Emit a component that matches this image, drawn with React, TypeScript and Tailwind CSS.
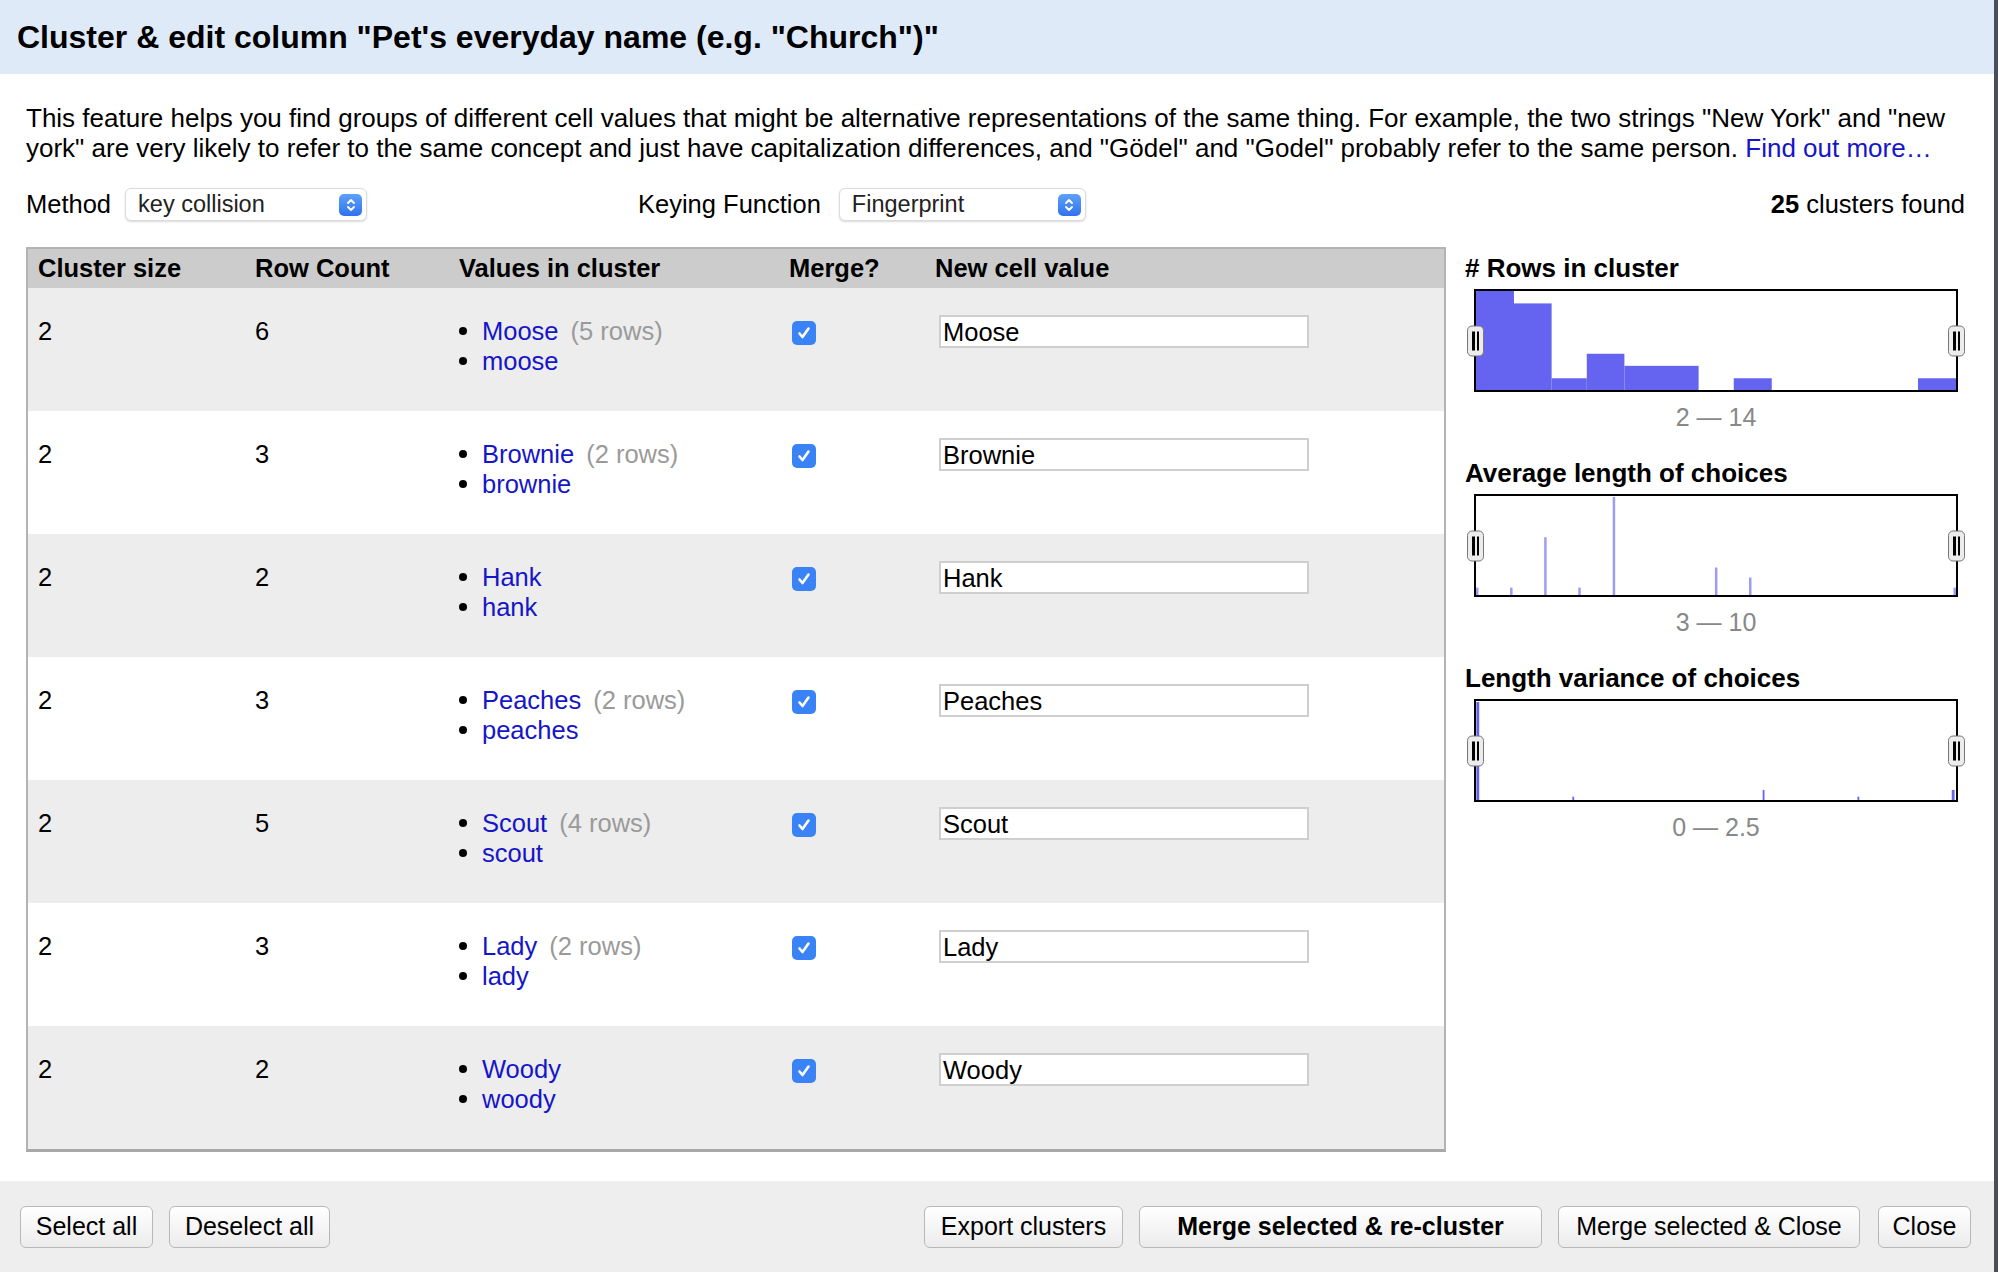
import React from "react";

type Value = { v: string; rows?: number };
type Cluster = { size: number; count: number; values: Value[] };

const clusters: Cluster[] = [
  { size: 2, count: 6, values: [{ v: "Moose", rows: 5 }, { v: "moose" }] },
  { size: 2, count: 3, values: [{ v: "Brownie", rows: 2 }, { v: "brownie" }] },
  { size: 2, count: 2, values: [{ v: "Hank" }, { v: "hank" }] },
  { size: 2, count: 3, values: [{ v: "Peaches", rows: 2 }, { v: "peaches" }] },
  { size: 2, count: 5, values: [{ v: "Scout", rows: 4 }, { v: "scout" }] },
  { size: 2, count: 3, values: [{ v: "Lady", rows: 2 }, { v: "lady" }] },
  { size: 2, count: 2, values: [{ v: "Woody" }, { v: "woody" }] },
];

// bars in a 1352 x 295 box
const rowBars = [
  [0, 107, 0],
  [107, 106, 37],
  [213, 99, 260],
  [312, 106, 187],
  [418, 209, 223],
  [726, 107, 260],
  [1245, 107, 260],
];
// thin lines: x, height
const avgLines = [
  [3, 22],
  [99, 22],
  [195, 172],
  [291, 22],
  [388, 292],
  [676, 82],
  [772, 52],
  [1348, 22],
];
const varLines = [
  [5, 292, 8],
  [274, 10, 5],
  [810, 30, 5],
  [1077, 10, 5],
  [1344, 30, 8],
];

const Stepper = () => (
  <span className="flex h-[22px] w-[23px] items-center justify-center rounded-[5px] bg-gradient-to-b from-[#5fa0fa] to-[#2f72ee]">
    <svg width="10" height="16" viewBox="0 0 10 16" fill="none" stroke="white" strokeWidth="1.9" strokeLinecap="round" strokeLinejoin="round">
      <path d="M2 6 5 3 8 6" />
      <path d="M2 10 5 13 8 10" />
    </svg>
  </span>
);

const Select = ({ label, width }: { label: string; width: string }) => (
  <div
    className={`flex h-[33px] ${width} items-center justify-between rounded-[6px] border border-[#dcdcdc] bg-white pl-[12px] pr-[4px] shadow-[0_1px_2px_rgba(0,0,0,0.15)]`}
  >
    <span className="text-[23.5px] text-[#222]">{label}</span>
    <Stepper />
  </div>
);

const Checkbox = () => (
  <span className="flex h-[24px] w-[24px] items-center justify-center rounded-[5px] bg-[#3a83f6]">
    <svg width="16" height="16" viewBox="0 0 16 16" fill="none" stroke="white" strokeWidth="2.6" strokeLinecap="round" strokeLinejoin="round">
      <path d="M3.5 8.5 6.5 12 12.5 3.5" />
    </svg>
  </span>
);

const Handle = ({ side }: { side: "left" | "right" }) => (
  <span
    className={`absolute top-1/2 flex h-[31px] w-[17px] -translate-y-1/2 items-center justify-center gap-[2px] rounded-[5px] border-[1.5px] border-[#777] bg-[#ececec] ${
      side === "left" ? "-left-[9px]" : "-right-[9px]"
    }`}
  >
    <span className="h-[19px] w-[2.5px] bg-black" />
    <span className="h-[19px] w-[2.5px] bg-black" />
  </span>
);

const Chart = ({
  title,
  range,
  children,
}: {
  title: string;
  range: string;
  children: React.ReactNode;
}) => (
  <div className="flex flex-col">
    <div className="text-[26px] font-bold leading-[30px]">{title}</div>
    <div className="relative ml-[9px] mt-[6px] h-[103px] w-[484px] border-2 border-black bg-white">
      <svg className="absolute inset-0 h-full w-full" viewBox="0 0 1352 295" preserveAspectRatio="none">
        {children}
      </svg>
      <Handle side="left" />
      <Handle side="right" />
    </div>
    <div className="ml-[9px] mt-[10px] w-[484px] text-center text-[25px] leading-[30px] text-[#888]">{range}</div>
  </div>
);

const Button = ({ children, className = "" }: { children: React.ReactNode; className?: string }) => (
  <button
    className={`h-[42px] rounded-[6px] border-[1.5px] border-[#b8b8b8] bg-gradient-to-b from-white to-[#ececec] text-[25px] leading-none text-black ${className}`}
  >
    {children}
  </button>
);

export default function App() {
  return (
    <div className="flex h-[1272px] w-full flex-col border-r-4 border-[#4a4f57] bg-white font-['Liberation_Sans',Arial,sans-serif] text-black">
      <div className="flex h-[74px] items-center bg-[#dfeaf9] px-[17px]">
        <h1 className="text-[32px] font-bold">Cluster &amp; edit column "Pet's everyday name (e.g. "Church")"</h1>
      </div>

      <div className="flex flex-1 flex-col pl-[26px] pr-[26px]">
        <p className="mt-[29px] text-[26px] leading-[30px]">
          This feature helps you find groups of different cell values that might be alternative representations of the
          same thing. For example, the two strings "New York" and "new york" are very likely to refer to the same concept
          and just have capitalization differences, and "Gödel" and "Godel" probably refer to the same person.{" "}
          <a className="text-[#1515c9]">Find out more…</a>
        </p>

        <div className="mt-[25px] flex h-[33px] items-center pr-[3px] text-[25.5px]">
          <div className="flex w-[612px] items-center">
            <span>Method</span>
            <div className="ml-[14px]">
              <Select label="key collision" width="w-[242px]" />
            </div>
          </div>
          <div className="flex items-center">
            <span>Keying Function</span>
            <div className="ml-[18px]">
              <Select label="Fingerprint" width="w-[247px]" />
            </div>
          </div>
          <div className="ml-auto">
            <b>25</b> clusters found
          </div>
        </div>

        <div className="mt-[26px] flex">
          <div className="w-[1420px] border-2 border-b-[3px] border-[#b4b4b4] border-b-[#a8a8a8] text-[25.5px]">
            <div className="grid h-[39px] grid-cols-[217px_204px_330px_150px_1fr] items-center bg-[#cccccc] font-bold">
              <div className="pl-[10px]">Cluster size</div>
              <div className="pl-[10px]">Row Count</div>
              <div className="pl-[10px]">Values in cluster</div>
              <div className="pl-[10px]">Merge?</div>
              <div className="pl-[6px]">New cell value</div>
            </div>
            {clusters.map((c, i) => (
              <div
                key={i}
                className={`grid h-[123px] grid-cols-[217px_204px_330px_150px_1fr] items-start leading-[30px] ${
                  i % 2 === 0 ? "bg-[#ededed]" : "bg-white"
                }`}
              >
                <div className="pl-[10px] pt-[28px]">{c.size}</div>
                <div className="pl-[10px] pt-[28px]">{c.count}</div>
                <div className="pl-[10px] pt-[28px]">
                  {c.values.map((v) => (
                    <div key={v.v} className="flex items-center">
                      <span className="mr-[15px] h-[8px] w-[8px] rounded-full bg-black" />
                      <a className="text-[#1515c9]">{v.v}</a>
                      {v.rows && <span className="ml-[12px] text-[#9a9a9a]">({v.rows} rows)</span>}
                    </div>
                  ))}
                </div>
                <div className="pl-[13px] pt-[33px]">
                  <Checkbox />
                </div>
                <div className="pl-[10px] pt-[27px]">
                  <div className="flex h-[33px] w-[370px] items-center border-2 border-[#cfcfcf] bg-white pl-[2px]">
                    {c.values[0].v}
                  </div>
                </div>
              </div>
            ))}
          </div>

          <div className="flex flex-col gap-[26px] pl-[19px] pt-[6px]">
            <Chart title="# Rows in cluster" range="2 — 14">
              {rowBars.map(([x, w, t]) => (
                <rect key={x} x={x} y={t} width={w} height={295 - t} fill="#6464f0" />
              ))}
            </Chart>
            <Chart title="Average length of choices" range="3 — 10">
              {avgLines.map(([x, h]) => (
                <rect key={x} x={x - 3} y={295 - h} width={7} height={h} fill="#9c9cf6" />
              ))}
            </Chart>
            <Chart title="Length variance of choices" range="0 — 2.5">
              {varLines.map(([x, h, w]) => (
                <rect key={x} x={x - w / 2} y={295 - h} width={w} height={h} fill="#6464f0" />
              ))}
            </Chart>
          </div>
        </div>
      </div>

      <div className="flex h-[91px] items-center bg-[#eeeeee] pl-[20px] pr-[23px]">
        <div className="flex gap-[16px]">
          <Button className="w-[133px]">Select all</Button>
          <Button className="w-[161px]">Deselect all</Button>
        </div>
        <div className="ml-auto flex gap-[16px]">
          <Button className="w-[199px]">Export clusters</Button>
          <Button className="w-[403px] text-[25.5px] font-bold">Merge selected &amp; re-cluster</Button>
          <Button className="w-[302px]">Merge selected &amp; Close</Button>
          <Button className="ml-[2px] w-[93px]">Close</Button>
        </div>
      </div>
    </div>
  );
}
